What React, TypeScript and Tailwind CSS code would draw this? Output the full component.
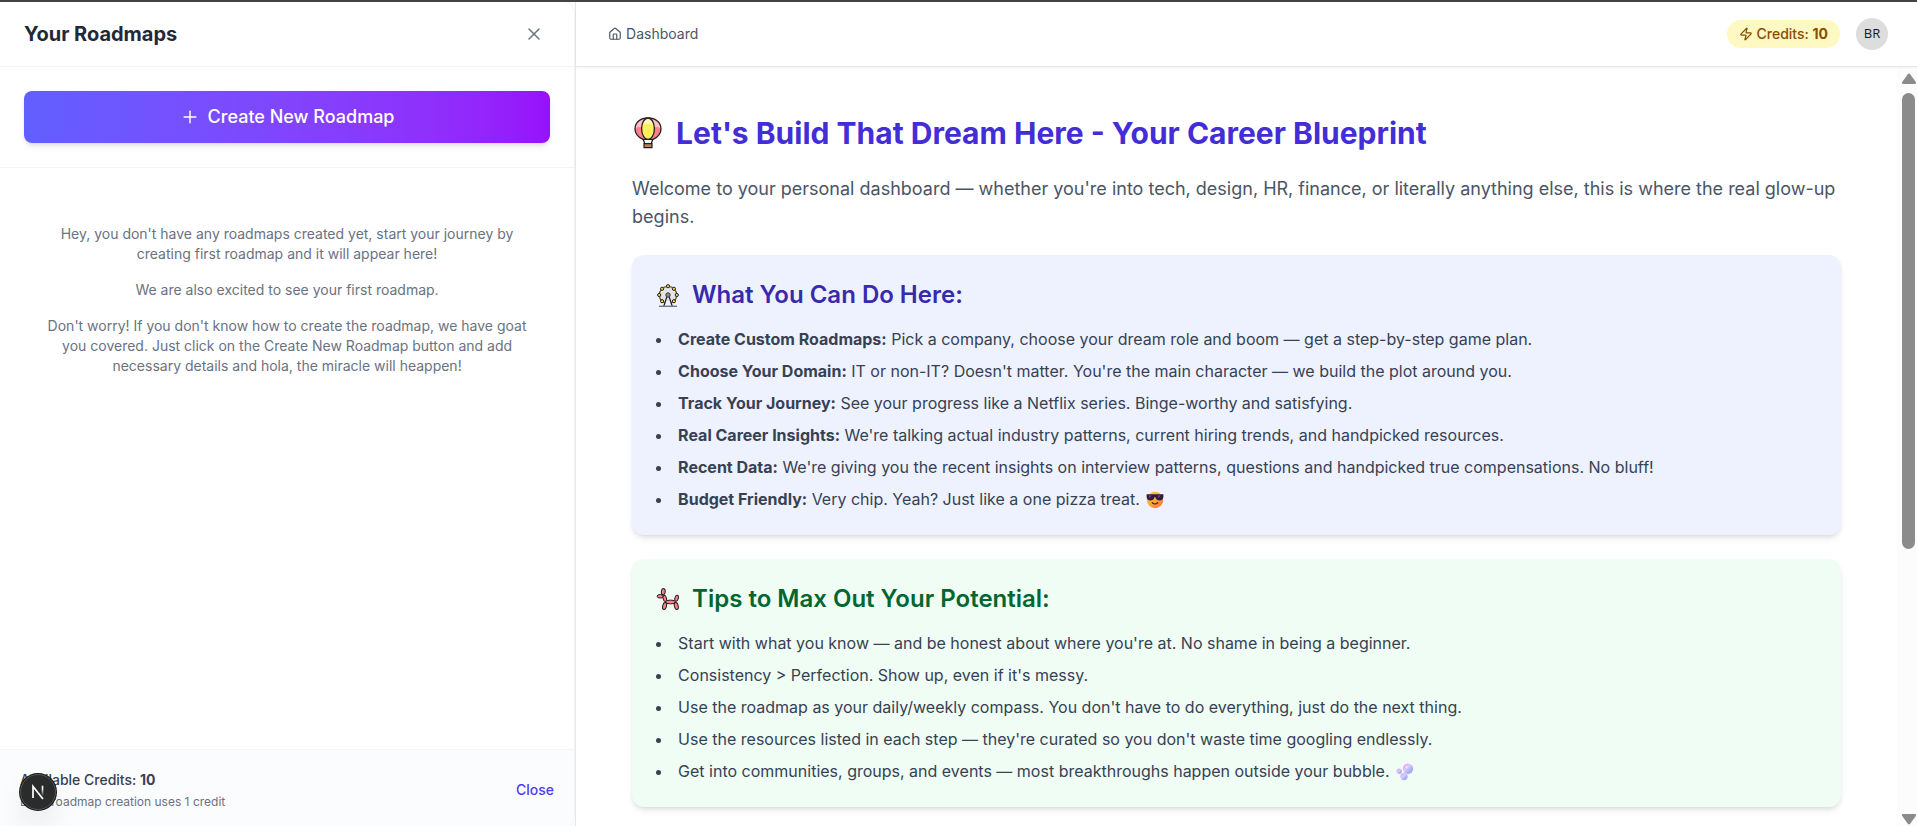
import type { ReactNode } from "react";
import { House, Plus, X, Zap } from "lucide-react";

function BalloonIcon() {
  return (
    <svg viewBox="0 0 32 32" className="size-8 shrink-0" aria-hidden="true">
      <path d="M11 22l2 5h6l2-5" fill="#fff" stroke="#231f20" strokeWidth="1.300" />
      <path d="M16 .9C8.500 .9 3 5.700 3 11.900c0 5 4 8.500 8 10.500h10c4-2 8-5.500 8-10.500C29 5.700 23.500 .9 16 .9z" fill="#ff808c" />
      <path d="M16 .9C8.500 .9 3 5.700 3 11.900l3-2 20 0 3 2C29 5.700 23.500 .9 16 .9z" fill="#ffbfc5" />
      <path d="M16 .9C8.500 .9 3 5.700 3 11.900c0 5 4 8.500 8 10.500h10c4-2 8-5.500 8-10.500C29 5.700 23.500 .9 16 .9z" fill="none" stroke="#231f20" strokeWidth="1.300" />
      <ellipse cx="16" cy="11.700" rx="6.400" ry="10.700" fill="#ffef5e" />
      <path d="M9.800 8.400C10.700 4 13 1 16 1S21.300 4 22.200 8.400c-3-2.300-9.400-2.300-12.400 0z" fill="#fff9bf" />
      <ellipse cx="16" cy="11.700" rx="6.400" ry="10.700" fill="none" stroke="#231f20" strokeWidth="1.300" />
      <path d="M12 26.700h8v3.900h-8z" fill="#bf8256" stroke="#231f20" strokeWidth="1.200" />
    </svg>
  );
}

const cabins = [
  [12, 3.2],
  [17.9, 5.8],
  [20.8, 12],
  [17.9, 18.2],
  [6.1, 18.2],
  [3.2, 12],
  [6.1, 5.8],
];

function FerrisWheelIcon() {
  return (
    <svg viewBox="0 0 24 24" className="size-6 shrink-0" aria-hidden="true">
      <circle cx="12" cy="12" r="8.700" fill="#e3e3e3" stroke="#4a4a52" strokeWidth="1.200" />
      <path d="M12 4v8M4 12h16M6.300 6.300L12 12M17.700 6.300L12 12" stroke="#f4f4f4" strokeWidth="0.600" />
      <path d="M9.800 18l-1.500 5.300h7.400L14.200 18z" fill="#eef2ff" />
      <path d="M10.800 14L7.800 23.300M13.200 14l3 9.300" stroke="#231f20" strokeWidth="1.200" />
      <circle cx="12" cy="12" r="2.200" fill="#8a8a90" stroke="#35353c" strokeWidth="1" />
      {cabins.map(([cx, cy]) => (
        <circle key={`${cx}-${cy}`} cx={cx} cy={cy} r="1.600" fill="#f5d63d" stroke="#231f20" strokeWidth="1" />
      ))}
      <path d="M3 23.300h18" stroke="#77777c" strokeWidth="1.400" />
    </svg>
  );
}

function BalloonDogIcon() {
  return (
    <svg viewBox="0 0 24 24" className="size-6 shrink-0" fill="#ff808c" stroke="#231f20" strokeWidth="1" aria-hidden="true">
      <ellipse cx="7.300" cy="4.700" rx="1.900" ry="3.100" transform="rotate(8 7.300 4.700)" />
      <ellipse cx="4.200" cy="9.300" rx="3.100" ry="1.800" />
      <ellipse cx="8.800" cy="11.500" rx="1.700" ry="3.200" transform="rotate(-15 8.800 11.500)" />
      <ellipse cx="20.600" cy="11.200" rx="1.700" ry="3.100" transform="rotate(15 20.600 11.200)" />
      <ellipse cx="14.500" cy="15" rx="5" ry="1.900" />
      <ellipse cx="8.600" cy="19" rx="1.900" ry="3.500" transform="rotate(14 8.600 19)" />
      <ellipse cx="20.300" cy="19" rx="1.900" ry="3.500" transform="rotate(-14 20.300 19)" />
    </svg>
  );
}

function SunglassesFace() {
  return (
    <svg viewBox="0 0 18 18" className="ml-0.5 inline-block size-[18px] align-[-4px]" role="img" aria-label="Smiling face with sunglasses">
      <defs>
        <linearGradient id="face" x1="0" y1="0" x2="1" y2="1">
          <stop offset="0" stopColor="#ffc83d" />
          <stop offset="0.550" stopColor="#ffa52e" />
          <stop offset="1" stopColor="#f4664a" />
        </linearGradient>
      </defs>
      <circle cx="9" cy="9" r="8.200" fill="url(#face)" />
      <path d="M.6 3.200h16.800v2.600c0 2.300-1.500 3.700-3.800 3.700S10 8.400 9.600 6.200H8.400C8 8.400 6.700 9.500 4.400 9.500S.6 8.100.6 5.800z" fill="#321b41" />
      <path d="M3 4.500h2.500L3.300 7z M12 4.500h2.500L12.300 7z" fill="#7b4c91" />
      <path d="M6.300 11.800c1.500 1.500 3.900 1.500 5.400 0" stroke="#56231f" strokeWidth="1.300" strokeLinecap="round" fill="none" />
    </svg>
  );
}

function Bubbles() {
  return (
    <svg viewBox="0 0 18 18" className="ml-0.5 inline-block size-[18px] align-[-4px]" role="img" aria-label="Bubbles">
      <defs>
        <linearGradient id="bubble" x1="0" y1="0" x2="1" y2="1">
          <stop offset="0" stopColor="#e68af0" />
          <stop offset="0.400" stopColor="#dcc9fb" />
          <stop offset="0.700" stopColor="#9db4f8" />
          <stop offset="1" stopColor="#f08fd0" />
        </linearGradient>
      </defs>
      <circle cx="12" cy="5.800" r="5.200" fill="url(#bubble)" />
      <circle cx="3.300" cy="8.300" r="2.700" fill="url(#bubble)" />
      <circle cx="8" cy="13.600" r="3.700" fill="url(#bubble)" />
      <circle cx="10.500" cy="4" r="1" fill="#f7e8ff" />
    </svg>
  );
}

const features: { label: string; text: string; emoji?: ReactNode }[] = [
  { label: "Create Custom Roadmaps:", text: "Pick a company, choose your dream role and boom — get a step-by-step game plan." },
  { label: "Choose Your Domain:", text: "IT or non-IT? Doesn't matter. You're the main character — we build the plot around you." },
  { label: "Track Your Journey:", text: "See your progress like a Netflix series. Binge-worthy and satisfying." },
  { label: "Real Career Insights:", text: "We're talking actual industry patterns, current hiring trends, and handpicked resources." },
  { label: "Recent Data:", text: "We're giving you the recent insights on interview patterns, questions and handpicked true compensations. No bluff!" },
  { label: "Budget Friendly:", text: "Very chip. Yeah? Just like a one pizza treat.", emoji: <SunglassesFace /> },
];

const tips: { text: string; emoji?: ReactNode }[] = [
  { text: "Start with what you know — and be honest about where you're at. No shame in being a beginner." },
  { text: "Consistency > Perfection. Show up, even if it's messy." },
  { text: "Use the roadmap as your daily/weekly compass. You don't have to do everything, just do the next thing." },
  { text: "Use the resources listed in each step — they're curated so you don't waste time googling endlessly." },
  { text: "Get into communities, groups, and events — most breakthroughs happen outside your bubble.", emoji: <Bubbles /> },
];

function Sidebar() {
  return (
    <div className="flex w-[30%] shrink-0 box-content border-r border-gray-200 bg-gray-50">
      <aside className="flex min-w-0 flex-1 flex-col overflow-hidden rounded-r-xl border-r border-gray-100 bg-white">
        <div className="flex h-[65px] shrink-0 items-center justify-between border-b border-gray-100 px-6">
          <h2 className="text-xl font-bold text-gray-800">Your Roadmaps</h2>
          <button type="button" aria-label="Close sidebar" className="p-1.5 text-gray-500">
            <X className="size-5" strokeWidth={1.75} />
          </button>
        </div>
        <div className="border-b border-gray-100 p-6">
          <button
            type="button"
            className="flex h-[52px] w-full items-center justify-center gap-2 rounded-lg bg-linear-to-r from-[#615fff] to-[#9810fa] text-lg font-medium text-white shadow-md"
          >
            <Plus className="size-5" strokeWidth={1.75} />
            Create New Roadmap
          </button>
        </div>
        <div className="flex flex-1 flex-col gap-4 px-10 py-14 text-center text-sm text-gray-500">
          <p>Hey, you don't have any roadmaps created yet, start your journey by creating first roadmap and it will appear here!</p>
          <p>We are also excited to see your first roadmap.</p>
          <p>
            Don't worry! If you don't know how to create the roadmap, we have goat you covered. Just click on the Create New
            Roadmap button and add necessary details and hola, the miracle will heappen!
          </p>
        </div>
        <div className="flex items-center justify-between border-t border-gray-100 bg-[#fbfcfe] px-5 pt-5 pb-4">
          <div className="flex flex-col gap-1">
            <p className="text-sm font-medium text-gray-700">
              Available Credits: <span className="font-bold">10</span>
            </p>
            <p className="text-xs text-gray-500">Each roadmap creation uses 1 credit</p>
          </div>
          <button type="button" className="text-sm font-medium text-[#4f39f6]">
            Close
          </button>
        </div>
      </aside>
    </div>
  );
}

function Header() {
  return (
    <header className="z-10 flex h-[65px] shrink-0 items-center justify-between border-b border-gray-200 bg-white pr-[29px] pl-8 shadow-xs">
      <nav>
        <a href="#dashboard" className="flex items-center gap-1 text-sm text-gray-600">
          <House className="size-3.5" />
          Dashboard
        </a>
      </nav>
      <div className="flex items-center gap-4">
        <div className="flex h-7 items-center gap-1 rounded-full bg-yellow-100 px-3 text-sm font-medium text-yellow-800">
          <Zap className="size-3.5" />
          <span>
            Credits: <span className="font-bold">10</span>
          </span>
        </div>
        <button type="button" className="size-8 rounded-full bg-[#ddd] font-['Open_Sans',sans-serif] text-[13px] text-gray-900">
          BR
        </button>
      </div>
    </header>
  );
}

function Scrollbar() {
  return (
    <div className="flex w-5 shrink-0 flex-col items-center bg-[#fcfcfc] pt-1.5 pb-px pl-[3px] text-[#8b8b8b]" aria-hidden="true">
      <svg viewBox="0 0 16 12" className="h-3 w-4 shrink-0" fill="currentColor">
        <path d="M6.800 1.300a1.500 1.500 0 0 1 2.400 0l5.600 7.700c.7 1 .1 2-1 2H2.200c-1.100 0-1.700-1-1-2z" />
      </svg>
      <div className="my-2 flex w-full flex-1 justify-center">
        <div className="h-[64%] w-[13px] rounded-full bg-[#8b8b8b]" />
      </div>
      <svg viewBox="0 0 16 12" className="h-3 w-4 shrink-0" fill="currentColor">
        <path d="M6.800 10.700a1.500 1.500 0 0 0 2.400 0L14.800 3c.7-1 .1-2-1-2H2.200c-1.100 0-1.700 1-1 2z" />
      </svg>
    </div>
  );
}

export default function App() {
  return (
    <div className="flex h-screen overflow-hidden border-t-2 border-[#444] bg-white font-['Inter',sans-serif]">
      <Sidebar />
      <div className="flex min-w-0 flex-1 flex-col">
        <Header />
        <div className="flex min-h-0 flex-1">
          <main className="flex min-w-0 flex-1 flex-col gap-6 overflow-hidden px-14 pt-12">
            <h1 className="flex items-center gap-3 text-3xl font-bold text-indigo-700">
              <BalloonIcon />
              Let's Build That Dream Here - Your Career Blueprint
            </h1>
            <p className="text-lg text-gray-600">
              Welcome to your personal dashboard — whether you're into tech, design, HR, finance, or literally anything
              else, this is where the real glow-up begins.
            </p>
            <section className="rounded-xl bg-indigo-50 p-6 shadow-md">
              <h2 className="mb-4 flex items-center gap-3 text-2xl font-semibold text-indigo-800">
                <FerrisWheelIcon />
                What You Can Do Here:
              </h2>
              <ul className="list-inside list-disc space-y-2 text-gray-700">
                {features.map((item) => (
                  <li key={item.label}>
                    <strong className="font-bold">{item.label}</strong> {item.text} {item.emoji}
                  </li>
                ))}
              </ul>
            </section>
            <section className="rounded-xl bg-green-50 p-6 shadow-md">
              <h2 className="mb-4 flex items-center gap-3 text-2xl font-semibold text-green-800">
                <BalloonDogIcon />
                Tips to Max Out Your Potential:
              </h2>
              <ul className="list-inside list-disc space-y-2 text-gray-700">
                {tips.map((item) => (
                  <li key={item.text}>
                    {item.text} {item.emoji}
                  </li>
                ))}
              </ul>
            </section>
          </main>
          <Scrollbar />
        </div>
      </div>
      <button
        type="button"
        aria-label="Open Next.js Dev Tools"
        className="fixed bottom-4 left-5 flex size-9 items-center justify-center rounded-full border border-[#555] bg-[#2a2c2b] shadow-[0_0_0_1px_#171717,0_16px_32px_-8px_rgba(0,0,0,0.24)]"
      >
        <svg viewBox="0 0 16 16" className="size-4" fill="none" aria-hidden="true">
          <defs>
            <linearGradient id="stem" x1="0" y1="0" x2="0" y2="1">
              <stop offset="0.300" stopColor="#fff" />
              <stop offset="1" stopColor="#fff" stopOpacity="0" />
            </linearGradient>
          </defs>
          <path d="M3 14V2.500L13 15" stroke="#fff" strokeWidth="1.700" />
          <path d="M11.700 1.700h1.600V12h-1.600z" fill="url(#stem)" />
        </svg>
      </button>
    </div>
  );
}
